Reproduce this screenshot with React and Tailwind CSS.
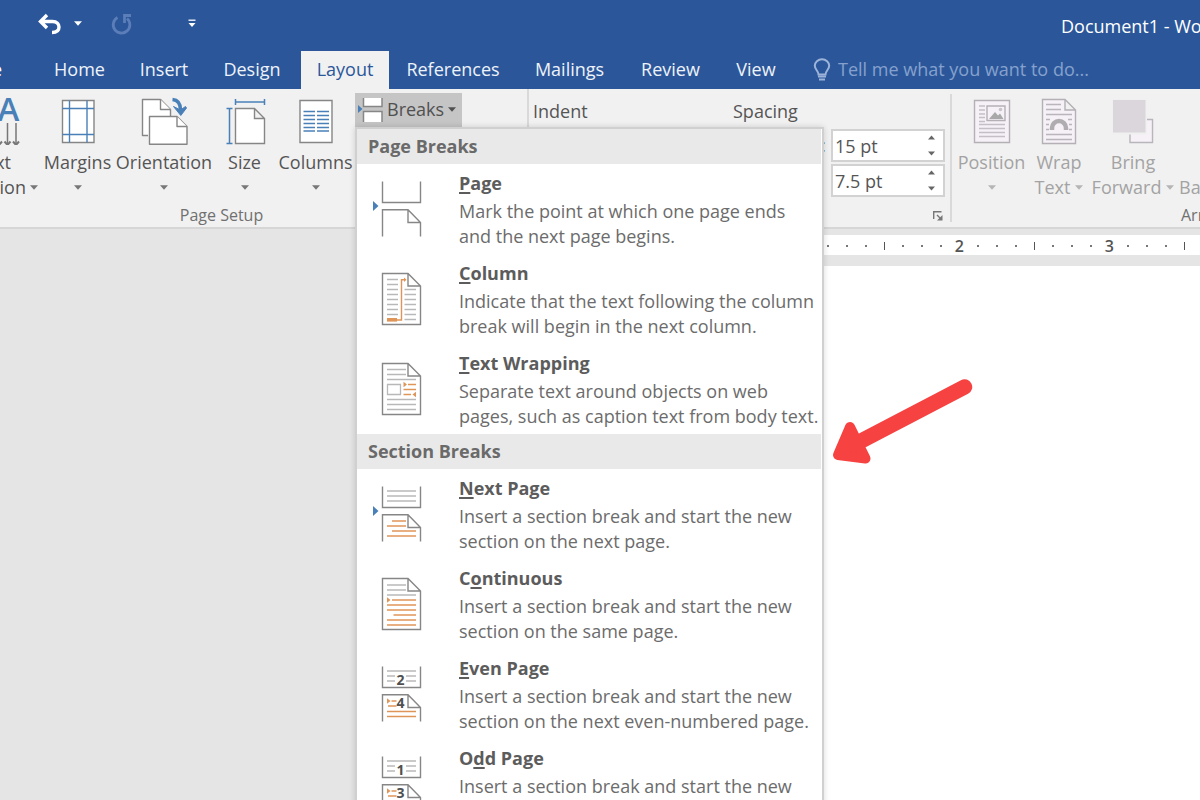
import React from "react";

const GRAY = "#868686";
const LIGHT = "#b8b8b8";
const BLUE = "#4a80b8";
const ORANGE = "#df9458";

function Caret({ className = "" }) {
  return (
    <svg width="8" height="5" viewBox="0 0 8 5" className={"shrink-0 " + className} aria-hidden="true">
      <path d="M0 0.3h8L4 4.7z" fill="currentColor" />
    </svg>
  );
}

function Lines({ rows, color = LIGHT }) {
  return (
    <g stroke={color} strokeWidth="1.5">
      {rows.map(([x1, x2, y], i) => (
        <path key={i} d={`M${x1} ${y}H${x2}`} />
      ))}
    </g>
  );
}

function PageTop() {
  return <path d="M10.5 2.5V23.5H48.5V2.5" fill="none" stroke={GRAY} strokeWidth="1.4" />;
}

function PageBottom() {
  return (
    <path
      d="M10.5 57.5V30.8H36L48.5 43.5V57.5M36 30.8V43.5H48.5"
      fill="none"
      stroke={GRAY}
      strokeWidth="1.4"
    />
  );
}

function WholePage() {
  return (
    <path
      d="M10.5 4.5H36L48.5 17V55.5H10.5ZM36 4.5V17H48.5"
      fill="#fff"
      stroke={GRAY}
      strokeWidth="1.4"
    />
  );
}

function MenuIcon({ children }) {
  return (
    <svg width="50" height="60" viewBox="0 0 50 60" className="shrink-0" aria-hidden="true">
      {children}
    </svg>
  );
}

const pointer = <path d="M1 22V32L6.5 27Z" fill={BLUE} />;

const icons = {
  page: (
    <MenuIcon>
      {pointer}
      <PageTop />
      <PageBottom />
    </MenuIcon>
  ),
  column: (
    <MenuIcon>
      <WholePage />
      <Lines rows={[10.5, 15.5, 20.5, 25.5, 30.5, 35.5, 40.5, 45.5].map((y) => [15, 26, y])} />
      <Lines rows={[20.5, 25.5, 30.5, 35.5, 40.5, 45.5, 50.5].map((y) => [32.5, 44, y])} />
      <path d="M15 49H25V52.6H15Z" fill={ORANGE} />
      <path d="M25 51H29.5V10.8H33" fill="none" stroke={ORANGE} strokeWidth="1.4" />
      <path d="M32 8.5V13L34.5 10.8Z" fill={ORANGE} />
    </MenuIcon>
  ),
  wrap: (
    <MenuIcon>
      <WholePage />
      <Lines rows={[[15, 34, 10.5], [15, 34, 15.5], [15, 44, 20.5], [15, 44, 40.5], [15, 44, 45.5], [15, 44, 50.5]]} />
      <path d="M15.5 25.5H28.5V35.5H15.5Z" fill="none" stroke={LIGHT} strokeWidth="1.3" />
      <Lines color={ORANGE} rows={[[36, 44, 25.5], [31.5, 44, 30.5], [31.5, 39, 35.5]]} />
      <path d="M31.5 22.8V28.2L35 25.5ZM44 32.8V38.2L40.5 35.5Z" fill={ORANGE} />
    </MenuIcon>
  ),
  next: (
    <MenuIcon>
      {pointer}
      <PageTop />
      <PageBottom />
      <Lines rows={[[15, 44, 7], [15, 44, 12], [15, 44, 17]]} />
      <Lines color={ORANGE} rows={[[20, 34, 37], [15, 34, 42], [20, 44, 47], [15, 44, 52]]} />
    </MenuIcon>
  ),
  continuous: (
    <MenuIcon>
      <WholePage />
      <Lines rows={[[15, 34, 11], [15, 34, 16], [15, 44, 21]]} />
      <Lines color={ORANGE} rows={[[20, 44, 26], [15, 44, 31], [15, 44, 36], [21.5, 44, 41], [15, 44, 46], [15, 44, 51]]} />
      <path d="M15 23.2V28.8L18.5 26Z" fill={ORANGE} />
    </MenuIcon>
  ),
  even: <NumberedPages top="2" bottom="4" />,
  odd: <NumberedPages top="1" bottom="3" />,
};

function NumberedPages({ top, bottom }) {
  return (
    <MenuIcon>
      <PageTop />
      <PageBottom />
      <Lines rows={[[15, 44, 7], [15, 23, 12], [34, 44, 12], [15, 23, 17], [34, 44, 17]]} />
      <Lines color={ORANGE} rows={[[19.5, 24.5, 37], [16, 24.5, 42], [15, 44, 47.5], [15, 44, 52.5]]} />
      <path d="M15 34.2V39.8L18.5 37Z" fill={ORANGE} />
      <g fill="#505050" fontFamily="Open Sans, sans-serif" fontWeight="700" fontSize="14" textAnchor="middle">
        <text x="28.5" y="20.5">{top}</text>
        <text x="28.5" y="44">{bottom}</text>
      </g>
    </MenuIcon>
  );
}

const sections = [
  {
    title: "Page Breaks",
    items: [
      { icon: "page", name: ["", "P", "age"], text: ["Mark the point at which one page ends", "and the next page begins."] },
      { icon: "column", name: ["", "C", "olumn"], text: ["Indicate that the text following the column", "break will begin in the next column."] },
      { icon: "wrap", name: ["", "T", "ext Wrapping"], text: ["Separate text around objects on web", "pages, such as caption text from body text."] },
    ],
  },
  {
    title: "Section Breaks",
    items: [
      { icon: "next", name: ["", "N", "ext Page"], text: ["Insert a section break and start the new", "section on the next page."] },
      { icon: "continuous", name: ["C", "o", "ntinuous"], text: ["Insert a section break and start the new", "section on the same page."] },
      { icon: "even", name: ["", "E", "ven Page"], text: ["Insert a section break and start the new", "section on the next even-numbered page."] },
      { icon: "odd", name: ["O", "d", "d Page"], text: ["Insert a section break and start the new", "section on the next odd-numbered page."] },
    ],
  },
];

function BreaksMenu() {
  return (
    <div
      role="menu"
      className="absolute left-0 top-full z-10 w-[469px] border-2 border-[#d0d0d0] bg-white pr-px shadow-[0_0_6px_rgba(0,0,0,0.15)]"
    >
      {sections.map((s) => (
        <section key={s.title}>
          <h2 className="h-[35px] bg-[#e9e9e9] pl-[11px] text-[18px] font-bold leading-[34px] text-[#6a6a6a]">{s.title}</h2>
          {s.items.map((it) => (
            <button key={it.icon} role="menuitem" type="button" className="flex h-[90px] w-full items-start gap-[37px] pl-[15px] text-left">
              <span className="pt-[15px]">{icons[it.icon]}</span>
              <span className="whitespace-nowrap pt-[7px] text-[18px] leading-[25px]">
                <span className="mb-[3px] block font-bold text-[#5c5c5c]">
                  {it.name[0]}
                  <span className="underline decoration-2 underline-offset-2">{it.name[1]}</span>
                  {it.name[2]}
                </span>
                {it.text.map((t) => (
                  <span key={t} className="block text-[#6c6c6c]">{t}</span>
                ))}
              </span>
            </button>
          ))}
        </section>
      ))}
    </div>
  );
}

function BigButton({ icon, lines, className, disabled = false }) {
  return (
    <button
      type="button"
      disabled={disabled}
      className={
        "flex shrink-0 flex-col items-center whitespace-nowrap text-[18px] leading-[25px] " +
        (disabled ? "text-[#a3a3a3] " : "text-[#555] ") +
        className
      }
    >
      {icon}
      <span className="mt-[5px]">{lines[0]}</span>
      <span className="flex h-[25px] items-center gap-[5px]">
        {lines[1] && <span>{lines[1]}</span>}
        <Caret className={disabled ? "text-[#b5b5b5]" : "text-[#777]"} />
      </span>
    </button>
  );
}

const textDirectionIcon = (
  <svg width="40" height="48" viewBox="0 0 40 48" aria-hidden="true">
    <text x="8.5" y="24" textAnchor="middle" fontFamily="Open Sans, sans-serif" fontWeight="600" fontSize="33" fill={BLUE}>A</text>
    <g fill="none" stroke="#777" strokeWidth="1.5">
      <path d="M-1 26V48M7.5 26V47M16 26V47" />
      <path d="M4.5 44.5L7.5 48L10.5 44.5M13 44.5L16 48L19 44.5M-4 44.5L-1 48L2 44.5" strokeWidth="2" />
    </g>
  </svg>
);

const marginsIcon = (
  <svg width="34" height="48" viewBox="0 0 34 48" aria-hidden="true">
    <path d="M1.500 3.500H33V45.500H1.500Z" fill="#fff" stroke={GRAY} strokeWidth="1.4" />
    <path d="M8.500 3.500V45.500M26 3.500V45.500M1.500 11.500H33M1.500 37.500H33" stroke={BLUE} strokeWidth="1.4" />
  </svg>
);

const orientationIcon = (
  <svg width="48" height="48" viewBox="0 0 48 48" aria-hidden="true">
    <g fill="#fff" stroke={GRAY} strokeWidth="1.4" strokeLinejoin="round">
      <path d="M8 38.5H2.5V2.5H20.5L30.5 12.5V19" />
      <path d="M20.5 2.5V12.5H30.5" />
      <path d="M9.500 19.500H37L47 29.500V47.300H9.500Z" />
      <path d="M37 19.500V29.500H47" />
    </g>
    <path d="M32.500 2.500C38 3 40.500 6 40.500 13" fill="none" stroke={BLUE} strokeWidth="3.500" />
    <path d="M33.500 9.500L40.500 13L45.500 9.500L46.500 11L40.800 18.500Z" fill={BLUE} stroke={BLUE} />
  </svg>
);

const sizeIcon = (
  <svg width="42" height="48" viewBox="0 0 42 48" aria-hidden="true">
    <path d="M11.500 11.500H30.500L40.500 21.500V46.500H11.500ZM30.500 11.500V21.500H40.500" fill="#fff" stroke={GRAY} strokeWidth="1.4" />
    <path d="M11.500 2V8M40.500 2V8M11.500 5H40.500M2.500 11.500H8.500M2.500 46.500H8.500M5.500 11.500V46.500" fill="none" stroke={BLUE} strokeWidth="1.5" />
  </svg>
);

const columnsIcon = (
  <svg width="36" height="48" viewBox="0 0 36 48" aria-hidden="true">
    <path d="M2 3.500H34V45.500H2Z" fill="#fff" stroke={GRAY} strokeWidth="1.4" />
    <path
      d={[14.5, 18.5, 22.5, 26.5, 30.5, 34].map((y) => `M5.500 ${y}H17M19 ${y}H31`).join("")}
      stroke={BLUE}
      strokeWidth="1.5"
    />
  </svg>
);

const positionIcon = (
  <svg width="38" height="48" viewBox="0 0 38 48" aria-hidden="true">
    <path d="M1.500 3.500H36.500V45.500H1.500Z" fill="#f6f1f7" stroke="#b4b0b5" strokeWidth="1.4" />
    <path
      d="M6 9H12M6 13H12M6 17H12M6 20.500H12M6 24.500H12M6 27.500H32M6 31.500H32M6 35.500H32M6 39.500H32"
      stroke="#c4bfc6"
      strokeWidth="1.4"
    />
    <path d="M14 9H32V23.500H14Z" fill="#f6f1f7" stroke="#b4b0b5" strokeWidth="1.4" />
    <path d="M16 22L22 15L25 18.500L27 16.500L30.500 22Z" fill="#a9a9a9" />
    <circle cx="27.500" cy="12.500" r="1.800" fill="#c9c4ca" />
  </svg>
);

const wrapIcon = (
  <svg width="38" height="48" viewBox="0 0 38 48" aria-hidden="true">
    <path d="M2.500 2.500H25L35.500 13V46.500H2.500ZM25 2.500V13H35.500" fill="#f6f1f7" stroke="#b4b0b5" strokeWidth="1.4" />
    <path d="M6 7.500H21M6 12.500H21M6 17.500H32M6 22.500H10M28 22.500H32M6 27.500H9M29 27.500H32M6 32.500H9M29 32.500H32M6 37.500H32M6 42.500H32" stroke="#b9b5ba" strokeWidth="1.5" />
    <path d="M12 33V31A7 7 0 0 1 26 31V33" fill="none" stroke="#b0adb1" strokeWidth="4.500" />
  </svg>
);

const bringIcon = (
  <svg width="42" height="48" viewBox="0 0 42 48" aria-hidden="true">
    <path d="M18 22.500H40.500V45.500H18Z" fill="#f6f1f7" stroke="#b9b5ba" strokeWidth="1.4" />
    <path d="M0 2H35V37.500H0Z" fill="#f0f0f0" />
    <path d="M1 3H33.500V35.500H1Z" fill="#dbd6db" />
  </svg>
);

function Spinner({ id, value }) {
  return (
    <div className="flex h-[33px] w-[114px] items-center border-2 border-[#d2d2d2] bg-white">
      <input id={id} type="text" defaultValue={value} className="h-full w-0 min-w-0 flex-1 bg-transparent pl-[2px] text-[18px] text-[#555] outline-none" />
      <div className="flex w-6 flex-col items-center gap-[11px] text-[#666]">
        <button type="button" aria-label="Increase" className="rotate-180"><Caret className="block w-[7px]" /></button>
        <button type="button" aria-label="Decrease"><Caret className="block w-[7px]" /></button>
      </div>
    </div>
  );
}

const tabs = [
  { name: "Home", width: "w-[83px]" },
  { name: "Insert", width: "w-[78px]" },
  { name: "Design", width: "w-[90px]" },
  { name: "Layout", width: "w-[88px]" },
  { name: "References", width: "w-[120px]" },
  { name: "Mailings", width: "w-[105px]" },
  { name: "Review", width: "w-[89px]" },
  { name: "View", width: "w-[74px]" },
];

function TitleBar() {
  return (
    <div className="flex h-[51px] items-center pl-[37px] text-white">
      <button type="button" aria-label="Undo" className="mb-1">
        <svg width="25" height="22" viewBox="0 0 25 22" aria-hidden="true">
          <path d="M10 2L3.500 8.500L10 15M4 8.500H15.500C20 8.500 22 11 22 14C22 17.500 19.500 19.500 15 19.500" fill="none" stroke="#fff" strokeWidth="3.400" />
        </svg>
      </button>
      <button type="button" aria-label="Undo history" className="mb-1 ml-3"><Caret /></button>
      <button type="button" aria-label="Repeat" className="mb-1 ml-[29px]">
        <svg width="22" height="22" viewBox="0 0 22 22" aria-hidden="true">
          <path d="M6.500 4.500A8.300 8.300 0 1 0 16 5.500M20 2.500H13.500V10" fill="none" stroke="#5b7db8" strokeWidth="2.800" />
        </svg>
      </button>
      <button type="button" aria-label="Customize toolbar" className="mb-1 ml-[55px]">
        <svg width="8" height="9" viewBox="0 0 8 9" aria-hidden="true">
          <path d="M0.500 1.200H7.500" stroke="#fff" strokeWidth="1.300" />
          <path d="M0.500 4H7.500L4 8Z" fill="#fff" />
        </svg>
      </button>
      <h1 className="ml-auto w-[139px] overflow-hidden whitespace-nowrap text-[18px] leading-6">Document1 - Word</h1>
    </div>
  );
}

function TabBar() {
  return (
    <nav className="flex h-[38px] items-stretch gap-1 text-[18px]">
      <a href="#file" className="-mr-1 flex w-[38px] items-center whitespace-nowrap pb-px text-white">
        <span className="flex w-[2px] justify-end overflow-hidden">File</span>
      </a>
      {tabs.map((t) => (
        <a
          key={t.name}
          href={"#" + t.name.toLowerCase()}
          className={
            "flex shrink-0 items-center justify-center pb-px " + t.width + " " +
            (t.name === "Layout" ? "bg-[#f1f1f1] text-[#2b579a]" : "text-[#eef2f9]")
          }
        >
          {t.name}
        </a>
      ))}
      <label htmlFor="tell" className="ml-3 flex items-center pl-1 text-[#9db4d9]">
        <svg width="18" height="24" viewBox="0 0 18 24" aria-hidden="true">
          <path d="M5.500 16.500C5.500 13 1.800 11.500 1.800 7.800A7.200 6.500 0 0 1 16.200 7.800C16.200 11.500 12.500 13 12.500 16.500Z" fill="none" stroke="currentColor" strokeWidth="2" />
          <path d="M5 18.500H13M6 21.500H12" stroke="currentColor" strokeWidth="2" />
        </svg>
      </label>
      <input
        id="tell"
        type="text"
        aria-label="Tell me what you want to do"
        placeholder="Tell me what you want to do..."
        className="min-w-0 flex-1 bg-transparent pb-px pl-[3px] text-[18px] outline-none placeholder:text-[#86a1cd]"
      />
    </nav>
  );
}

function Ribbon() {
  return (
    <div className="flex h-[140px] border-b-2 border-[#d6d6d6] bg-[#f1f1f1] text-[#555]">
      <div className="flex w-[527px] shrink-0 flex-col">
        <div className="flex items-start">
          <button type="button" className="mt-2 flex w-10 shrink-0 flex-col items-start whitespace-nowrap text-[18px] leading-[25px]">
            {textDirectionIcon}
            <span className="mt-[5px] flex w-[11px] justify-end overflow-hidden">Text</span>
            <span className="flex w-[39px] items-center gap-1 overflow-hidden">
              <span className="flex w-[26px] shrink-0 justify-end overflow-hidden">Direction</span>
              <Caret className="text-[#777]" />
            </span>
          </button>
          <BigButton className="mt-2 w-[75px]" icon={marginsIcon} lines={["Margins"]} />
          <BigButton className="mt-2 w-[98px]" icon={orientationIcon} lines={["Orientation"]} />
          <BigButton className="mt-2 w-[63px]" icon={sizeIcon} lines={["Size"]} />
          <BigButton className="mt-2 w-[79px]" icon={columnsIcon} lines={["Columns"]} />
          <div className="relative mt-1">
            <button type="button" aria-expanded="true" className="flex h-[34px] w-[107px] items-center gap-1 bg-[#c5c5c5] pb-px pl-[2px] text-[18px] text-[#505050]">
              <svg width="26" height="26" viewBox="0 0 26 26" aria-hidden="true">
                <path d="M6.500 1V9.500H25V1M6.500 25V14.500H25V25" fill="#fff" stroke={GRAY} strokeWidth="1.500" />
                <path d="M1 8V16L5.500 12Z" fill={BLUE} />
              </svg>
              <span>Breaks</span>
              <Caret />
            </button>
            <BreaksMenu />
          </div>
        </div>
        <div className="mt-auto w-[443px] text-center text-[16px] leading-6 text-[#707070]">Page Setup</div>
      </div>

      <div className="flex w-[423px] shrink-0 flex-col border-l-2 border-[#d9d9d9] pl-1 pt-[9px]">
        <div className="flex text-[18px] leading-[26px]">
          <div className="w-[200px]">Indent</div>
          <div>Spacing</div>
        </div>
        <div className="ml-[232px] mt-[5px] grid grid-cols-[66px_114px] gap-y-[2px] text-[18px]">
          <label htmlFor="before" className="flex items-center">Before:</label>
          <Spinner id="before" value="15 pt" />
          <label htmlFor="after" className="flex items-center">After:</label>
          <Spinner id="after" value="7.5 pt" />
        </div>
        <button type="button" aria-label="Paragraph settings" className="mb-[6px] ml-auto mr-[7px] mt-auto">
          <svg width="10" height="10" viewBox="0 0 10 10" aria-hidden="true">
            <path d="M0.700 8V0.700H8.500M4 4L8 8" fill="none" stroke="#777" strokeWidth="1.400" />
            <path d="M9.500 4V9.500H4Z" fill="#777" />
          </svg>
        </button>
      </div>

      <div className="my-[5px] w-[2px] shrink-0 bg-[#d9d9d9]" />

      <div className="flex min-w-0 flex-1 flex-col overflow-hidden pt-2">
        <div className="flex">
          <BigButton disabled className="w-[79px]" icon={positionIcon} lines={["Position"]} />
          <BigButton disabled className="w-[56px]" icon={wrapIcon} lines={["Wrap", "Text"]} />
          <BigButton disabled className="w-[92px]" icon={bringIcon} lines={["Bring", "Forward"]} />
          <button type="button" disabled className="w-[22px] shrink-0 overflow-hidden whitespace-nowrap pt-[78px] text-left text-[18px] leading-[25px] text-[#a3a3a3]">Backward</button>
        </div>
        <div className="mt-auto whitespace-nowrap pl-[229px] text-[16px] leading-6 text-[#707070]">Arrange</div>
      </div>
    </div>
  );
}

function Ruler() {
  return (
    <div className="ml-[800px] flex h-5 overflow-hidden bg-white text-[#555]">
      {["", 2, 3, 4, 5, 6, 7, 8].map((n, i) => (
        <div key={i} className="flex w-[150px] shrink-0 items-center">
          <span className="flex-1 pt-px text-center text-[16px] font-semibold leading-5">{n}</span>
          {[1, 2, 3, 4, 5, 6, 7].map((k) => (
            <span key={k} className="flex flex-1 justify-center pt-px">
              <span className={k === 4 ? "h-2 w-px bg-[#555]" : "h-[2px] w-[2px] bg-[#777]"} />
            </span>
          ))}
        </div>
      ))}
    </div>
  );
}

export default function App() {
  return (
    <div className="relative flex h-screen flex-col overflow-hidden bg-[#e5e5e5] font-['Open_Sans',sans-serif]">
      <header className="shrink-0 bg-[#2b579a]">
        <TitleBar />
        <TabBar />
        <Ribbon />
      </header>
      <main className="flex flex-1 flex-col pt-[6px]">
        <Ruler />
        <div className="ml-[500px] mt-[11px] flex-1 bg-white" />
      </main>
      <svg width="144" height="90" viewBox="0 0 144 90" className="absolute left-[831px] top-[377px]" aria-hidden="true">
        <path d="M133.500 10L32 63" stroke="#f64241" strokeWidth="15.500" strokeLinecap="round" />
        <path d="M19 50L7 78L34.500 81.500Z" fill="#f64241" stroke="#f64241" strokeWidth="10" strokeLinejoin="round" />
      </svg>
    </div>
  );
}
